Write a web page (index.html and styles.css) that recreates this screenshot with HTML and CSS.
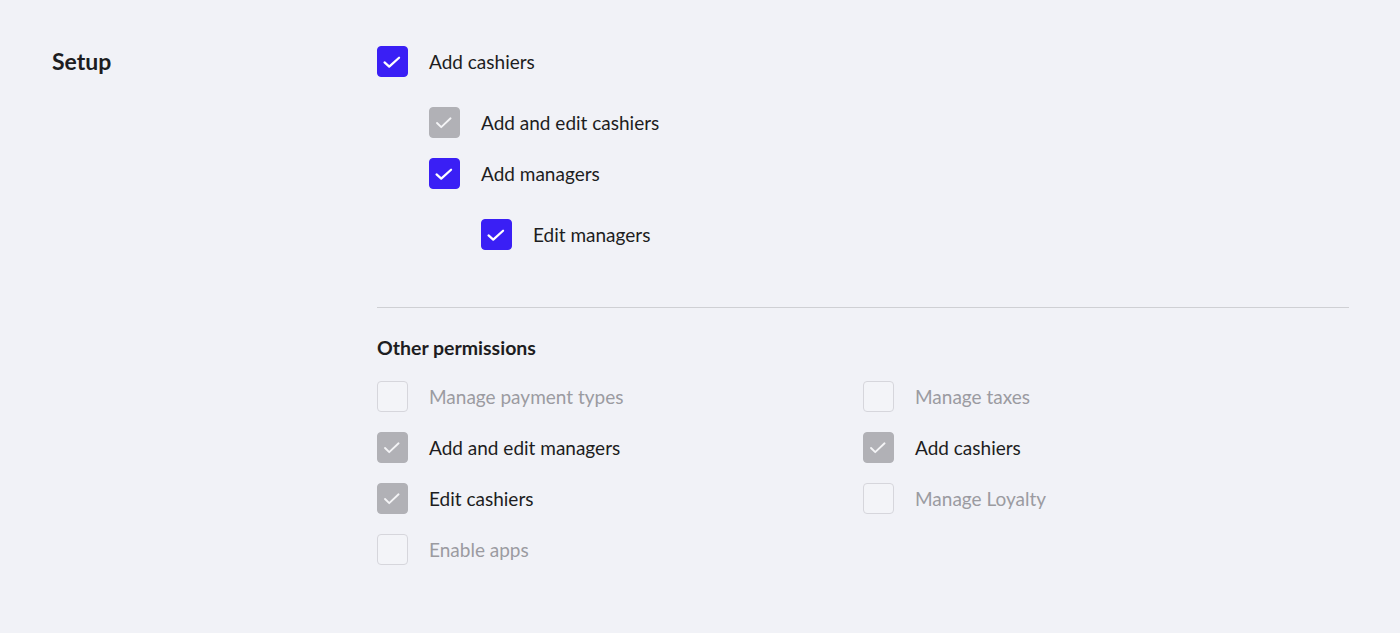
FILE: index.html
```html
<!DOCTYPE html>
<html lang="en">
<head>
    <meta charset="UTF-8">
    <meta name="viewport" content="width=device-width, initial-scale=1.0">
    <title>Role permissions</title>
    <link rel="stylesheet" href="styles.css">
</head>
<body>

    <section class="settings-section">
        <h2 class="section-title">Setup</h2>

        <div class="section-body">
            <ul class="perm-tree">
                <li>
                    <label class="perm-row">
                        <span class="check checked"><svg viewBox="0 0 31 31"><path d="M7 16.5l5 4.5 10.5-9.5"/></svg></span>
                        Add cashiers
                    </label>
                    <ul class="perm-tree nested">
                        <li>
                            <label class="perm-row">
                                <span class="check locked"><svg viewBox="0 0 31 31"><path d="M7.5 16l4.5 4.5 10-9.5"/></svg></span>
                                Add and edit cashiers
                            </label>
                        </li>
                        <li>
                            <label class="perm-row">
                                <span class="check checked"><svg viewBox="0 0 31 31"><path d="M7 16.5l5 4.5 10.5-9.5"/></svg></span>
                                Add managers
                            </label>
                            <ul class="perm-tree nested">
                                <li>
                                    <label class="perm-row">
                                        <span class="check checked"><svg viewBox="0 0 31 31"><path d="M7 16.5l5 4.5 10.5-9.5"/></svg></span>
                                        Edit managers
                                    </label>
                                </li>
                            </ul>
                        </li>
                    </ul>
                </li>
            </ul>

            <hr class="divider">

            <h3 class="group-title">Other permissions</h3>

            <div class="perm-grid">
                <label class="perm-row disabled"><span class="check"></span>Manage payment types</label>
                <label class="perm-row disabled"><span class="check"></span>Manage taxes</label>
                <label class="perm-row"><span class="check locked"><svg viewBox="0 0 31 31"><path d="M7.5 16l4.5 4.5 10-9.5"/></svg></span>Add and edit managers</label>
                <label class="perm-row"><span class="check locked"><svg viewBox="0 0 31 31"><path d="M7.5 16l4.5 4.5 10-9.5"/></svg></span>Add cashiers</label>
                <label class="perm-row"><span class="check locked"><svg viewBox="0 0 31 31"><path d="M7.5 16l4.5 4.5 10-9.5"/></svg></span>Edit cashiers</label>
                <label class="perm-row disabled"><span class="check"></span>Manage Loyalty</label>
                <label class="perm-row disabled"><span class="check"></span>Enable apps</label>
            </div>
        </div>
    </section>

</body>
</html>
```

FILE: styles.css
```css
body {
    margin: 0;
    font-family: 'Lato', 'Liberation Sans', sans-serif;
    background-color: #f1f2f7;
    color: #1d1d21;
}

.settings-section {
    display: flex;
    padding: 46px 51px 40px 52px;
}

.section-title {
    width: 325px;
    flex-shrink: 0;
    margin: 0;
    font-size: 23px;
    font-weight: 700;
    line-height: 30px;
}

.section-body {
    flex: 1;
}

.perm-tree {
    list-style: none;
    margin: 0;
    padding: 0;
}

.perm-tree.nested {
    padding-left: 52px;
    margin-top: 30px;
}

.perm-tree.nested .nested {
    margin-top: 30px;
}

.perm-tree.nested li + li {
    margin-top: 20px;
}

.perm-row {
    display: flex;
    align-items: center;
    gap: 21px;
    height: 31px;
    font-size: 19px;
    line-height: 29px;
    cursor: pointer;
}

.perm-row.disabled {
    color: #9b9ba1;
}

.check {
    width: 31px;
    height: 31px;
    flex-shrink: 0;
    box-sizing: border-box;
    border: 1px solid #d6d6dc;
    border-radius: 4px;
    background-color: #f3f4f8;
}

.check svg {
    display: block;
    width: 100%;
    height: 100%;
    fill: none;
    stroke: #fff;
    stroke-width: 2.4;
    stroke-linecap: round;
    stroke-linejoin: round;
}

.check.checked {
    background-color: #3a1ff5;
    border-color: #3a1ff5;
}

.check.locked {
    background-color: #b1b1b6;
    border-color: #b1b1b6;
}

.check.locked svg {
    stroke-width: 2;
    stroke: #f4f4f6;
}

/* rule between the setup tree and the other permissions */
.divider {
    border: none;
    border-top: 1px solid #cfd0d4;
    margin: 57px 0 0;
}

.group-title {
    margin: 27px 0 0;
    font-size: 19.5px;
    font-weight: 700;
    line-height: 25px;
}

.perm-grid {
    display: grid;
    grid-template-columns: 1fr 1fr;
    row-gap: 20px;
    margin-top: 21px;
}
```
